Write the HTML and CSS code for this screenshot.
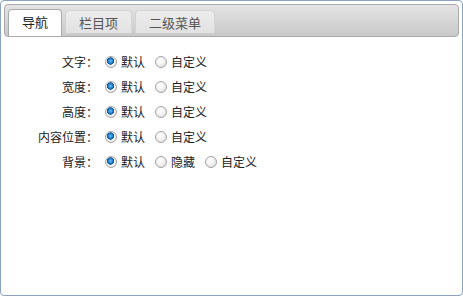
FILE: index.html
```
<!DOCTYPE html>
<html lang="zh-CN">
<head>
    <meta charset="UTF-8">
    <title>设置</title>
    <link rel="stylesheet" href="styles.css">
</head>
<body>
    <div class="tabs">
        <ul class="tab-nav">
            <li class="tab active"><a href="#nav">导航</a></li>
            <li class="tab"><a href="#column">栏目项</a></li>
            <li class="tab"><a href="#submenu">二级菜单</a></li>
        </ul>
        <div class="tab-panel" id="nav">
            <div class="row">
                <span class="label">文字：</span>
                <label class="opt"><input type="radio" name="font" checked>默认</label>
                <label class="opt"><input type="radio" name="font">自定义</label>
            </div>
            <div class="row">
                <span class="label">宽度：</span>
                <label class="opt"><input type="radio" name="width" checked>默认</label>
                <label class="opt"><input type="radio" name="width">自定义</label>
            </div>
            <div class="row">
                <span class="label">高度：</span>
                <label class="opt"><input type="radio" name="height" checked>默认</label>
                <label class="opt"><input type="radio" name="height">自定义</label>
            </div>
            <div class="row">
                <span class="label">内容位置：</span>
                <label class="opt"><input type="radio" name="pos" checked>默认</label>
                <label class="opt"><input type="radio" name="pos">自定义</label>
            </div>
            <div class="row">
                <span class="label">背景：</span>
                <label class="opt"><input type="radio" name="bg" checked>默认</label>
                <label class="opt"><input type="radio" name="bg">隐藏</label>
                <label class="opt"><input type="radio" name="bg">自定义</label>
            </div>
        </div>
    </div>
</body>
</html>
```
FILE: styles.css
```
/* Basic styles */
html, body {
    margin: 0;
    padding: 0;
    height: 100%;
}
body {
    font-family: "Noto Sans CJK SC", "DejaVu Sans", sans-serif;
    font-size: 12px;
    color: #222;
    background-color: #fff;
}

/* Tab widget */
.tabs {
    box-sizing: border-box;
    height: 296px;
    width: 463px;
    border: 1px solid #8ba3bd;
    border-radius: 4px;
    padding: 3px;
}
.tab-nav {
    display: flex;
    gap: 3px;
    list-style-type: none;
    margin: 0;
    padding: 4px 3px 0;
    height: 27px;
    border: 1px solid #aaa;
    border-radius: 4px;
    background: linear-gradient(#e4e4e4, #c9c9c9);
}
.tab {
    height: 22px;
    margin-top: 1px;
    border: 1px solid #d3d3d3;
    border-bottom: none;
    border-radius: 4px 4px 0 0;
    background: linear-gradient(#ececec, #e2e2e2);
}
.tab a {
    display: block;
    padding: 0 13px;
    line-height: 23px;
    font-size: 13px;
    color: #555;
    text-decoration: none;
}
.tab.active {
    height: 26px;
    margin-top: 0;
    border-color: #aaa;
    background: #fff;
}
.tab.active a {
    color: #212121;
    line-height: 24px;
}

/* Panel rows */
.tab-panel {
    padding: 12px 4px 0;
}
.row {
    display: flex;
    align-items: center;
    height: 25px;
}
.label {
    width: 90px;
    text-align: right;
    margin-right: 7px;
}
.opt {
    display: flex;
    align-items: center;
    margin-right: 10px;
}
.opt input {
    appearance: none;
    -webkit-appearance: none;
    box-sizing: border-box;
    width: 12px;
    height: 12px;
    margin: 0 4px 0 0;
    border: 1px solid #a4a4a4;
    border-radius: 50%;
    background: radial-gradient(circle at 40% 35%, #fff 0%, #f2f2f2 45%, #d4d4d4 100%);
}
.opt input:checked {
    background: radial-gradient(circle at 45% 40%, #6fc2ff 0%, #1c79c4 30%, #0d4f8c 42%, #f4f4f4 48%, #dcdcdc 100%);
}
```
